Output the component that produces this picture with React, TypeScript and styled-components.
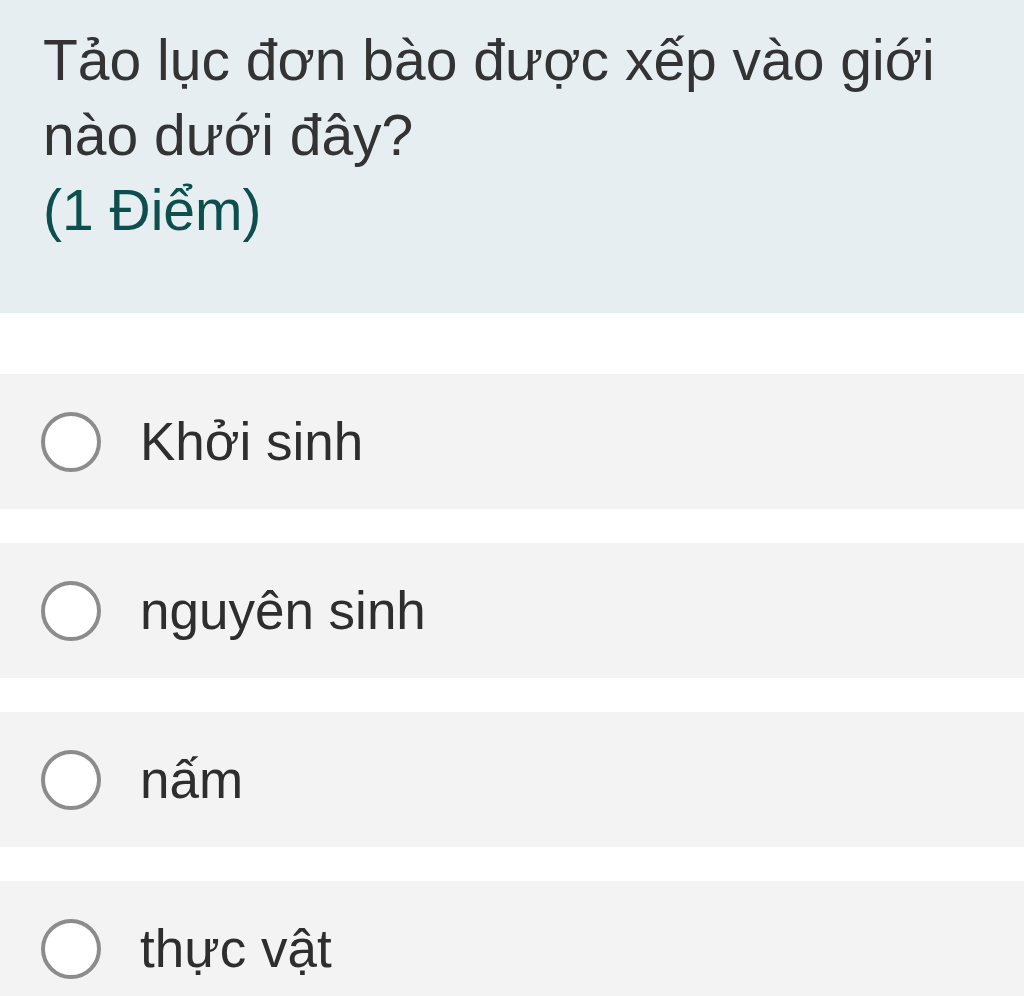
import React from "react";
import styled, { createGlobalStyle } from "styled-components";

const Global = createGlobalStyle`
  html, body { margin: 0; padding: 0; background: #ffffff; }
  body { font-family: "Liberation Sans", Arial, sans-serif; }
`;

const Page = styled.div`
  display: flex;
  flex-direction: column;
  width: 1024px;
  height: 996px;
  overflow: hidden;
`;

const Header = styled.div`
  background: #e6eef2;
  padding: 23px 40px 65px 43px;
`;

const Title = styled.div`
  font-size: 57px;
  line-height: 75px;
  color: #333333;
`;

const Points = styled.div`
  font-size: 57px;
  line-height: 75px;
  color: #0d4f4e;
`;

const Options = styled.div`
  display: flex;
  flex-direction: column;
  gap: 34px;
  margin-top: 61px;
`;

const Option = styled.label`
  display: flex;
  align-items: center;
  gap: 39px;
  height: 135px;
  flex-shrink: 0;
  padding-left: 41px;
  background: #f3f3f3;
`;

const Radio = styled.span`
  box-sizing: border-box;
  width: 60px;
  height: 60px;
  border-radius: 50%;
  border: 4px solid #8c8c8c;
  background: #ffffff;
  flex-shrink: 0;
`;

const OptionText = styled.span`
  font-size: 53px;
  color: #2e2e2e;
`;

const choices = ["Khởi sinh", "nguyên sinh", "nấm", "thực vật"];

export default function App() {
  return (
    <Page>
      <Global />
      <Header>
        <Title>Tảo lục đơn bào được xếp vào giới nào dưới đây?</Title>
        <Points>(1 Điểm)</Points>
      </Header>
      <Options>
        {choices.map((c) => (
          <Option key={c}>
            <Radio />
            <OptionText>{c}</OptionText>
          </Option>
        ))}
      </Options>
    </Page>
  );
}
